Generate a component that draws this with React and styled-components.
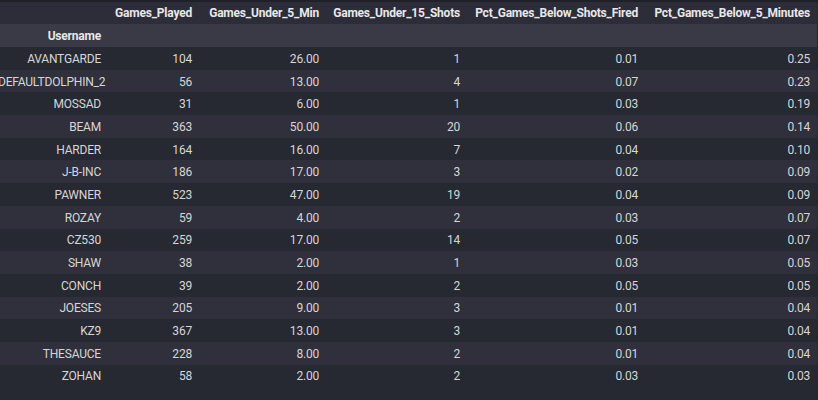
import styled, { createGlobalStyle } from "styled-components";

const rows = [
  ["AVANTGARDE", 104, "26.00", 1, "0.01", "0.25"],
  ["DEFAULTDOLPHIN_2", 56, "13.00", 4, "0.07", "0.23"],
  ["MOSSAD", 31, "6.00", 1, "0.03", "0.19"],
  ["BEAM", 363, "50.00", 20, "0.06", "0.14"],
  ["HARDER", 164, "16.00", 7, "0.04", "0.10"],
  ["J-B-INC", 186, "17.00", 3, "0.02", "0.09"],
  ["PAWNER", 523, "47.00", 19, "0.04", "0.09"],
  ["ROZAY", 59, "4.00", 2, "0.03", "0.07"],
  ["CZ530", 259, "17.00", 14, "0.05", "0.07"],
  ["SHAW", 38, "2.00", 1, "0.03", "0.05"],
  ["CONCH", 39, "2.00", 2, "0.05", "0.05"],
  ["JOESES", 205, "9.00", 3, "0.01", "0.04"],
  ["KZ9", 367, "13.00", 3, "0.01", "0.04"],
  ["THESAUCE", 228, "8.00", 2, "0.01", "0.04"],
  ["ZOHAN", 58, "2.00", 2, "0.03", "0.03"],
];

const columns = [
  { name: "Games_Played", width: 91 },
  { name: "Games_Under_5_Min", width: 127 },
  { name: "Games_Under_15_Shots", width: 141 },
  { name: "Pct_Games_Below_Shots_Fired", width: 178 },
  { name: "Pct_Games_Below_5_Minutes", width: 172 },
];

const GlobalStyle = createGlobalStyle`
  html, body {
    margin: 0;
    padding: 0;
    background: #262832;
    overflow: hidden;
  }
`;

const Output = styled.div`
  width: 818px;
  height: 400px;
  background: #262832;
  border-top: 2px solid #1f2028;
  box-sizing: border-box;
  overflow: hidden;
`;

const Frame = styled.table`
  width: 826px;
  margin-left: -9px;
  border-collapse: collapse;
  table-layout: fixed;
  font-family: Roboto, "Noto Sans", sans-serif;
  font-size: 12px;
  letter-spacing: -0.2px;
  color: #d6d6d6;
`;

const HeadRow = styled.tr`
  height: ${(p) => (p.$sub ? "23px" : "22px")};
  background: ${(p) => (p.$sub ? "#393a45" : "#2c2d38")};
`;

const Th = styled.th`
  text-align: right;
  font-weight: 700;
  color: #e8e8e8;
  padding: 0 7px;
  white-space: nowrap;
  line-height: 16px;
`;

const Row = styled.tr`
  height: 22.7px;
  background: ${(p) => (p.$even ? "#2f303b" : "transparent")};
`;

const Cell = styled.td`
  text-align: right;
  padding: 1px 7px 0;
  white-space: nowrap;
  line-height: 16px;
`;

export default function App() {
  return (
    <>
      <GlobalStyle />
      <Output>
        <Frame>
          <colgroup>
            <col style={{ width: 117 }} />
            {columns.map((c) => (
              <col key={c.name} style={{ width: c.width }} />
            ))}
          </colgroup>
          <thead>
            <HeadRow>
              <Th />
              {columns.map((c) => (
                <Th key={c.name}>{c.name}</Th>
              ))}
            </HeadRow>
            <HeadRow $sub>
              <Th>Username</Th>
              {columns.map((c) => (
                <Th key={c.name} />
              ))}
            </HeadRow>
          </thead>
          <tbody>
            {rows.map((r, i) => (
              <Row key={r[0]} $even={i % 2 === 1}>
                {r.map((v, j) => (
                  <Cell key={j}>{v}</Cell>
                ))}
              </Row>
            ))}
          </tbody>
        </Frame>
      </Output>
    </>
  );
}
